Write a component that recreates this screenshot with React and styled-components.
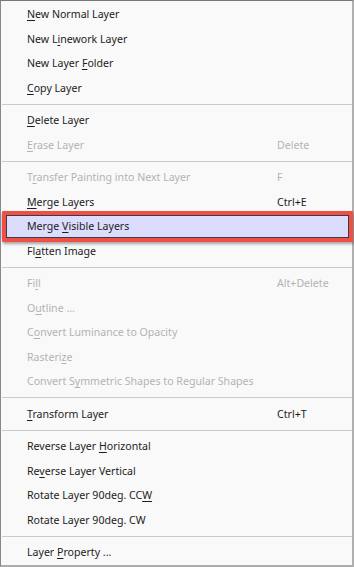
import React from "react";
import styled, { createGlobalStyle } from "styled-components";

const Global = createGlobalStyle`
  html, body { margin: 0; padding: 0; background: #ffffff; }
  body { font-family: "Noto Sans", "DejaVu Sans", sans-serif; }
`;

const Menu = styled.div`
  box-sizing: border-box;
  width: 354px;
  height: 567px;
  background: #f9f9f9;
  border-top: 1px solid #777777;
  border-left: 1px solid #888888;
  border-right: 2px solid #b0b0b0;
  border-bottom: 2px solid #acacac;
  padding-top: 1px;
  display: flex;
  flex-direction: column;
`;

const Item = styled.div`
  position: relative;
  height: 24.5px;
  flex: 0 0 24.5px;
  display: grid;
  grid-template-columns: 1fr 75px;
  align-items: center;
  padding-left: 26px;
  font-size: 10.6px;
  color: ${(p) => (p.$disabled ? "#b3b3b3" : "#1c1c1c")};
  background: ${(p) => (p.$active ? "#dcdcfd" : "transparent")};
  white-space: nowrap;

  ${(p) =>
    p.$active &&
    `
    &::after {
      content: "";
      position: absolute;
      top: -3px;
      bottom: -3px;
      left: 1px;
      right: -1px;
      border: 4px solid #ef4f45;
      border-radius: 1px;
      box-shadow: inset 0 0 0 1px #3a3a48, 1px 2px 3px rgba(0, 0, 0, 0.35);
      pointer-events: none;
    }
  `}
`;

const Label = styled.span``;

const Shortcut = styled.span``;

const Key = styled.span`
  text-decoration: underline;
  text-underline-offset: 2px;
`;

const Separator = styled.div`
  flex: 0 0 8px;
  display: flex;
  align-items: center;
  margin: 0 0 0 1px;

  &::before {
    content: "";
    flex: 1;
    height: 1px;
    background: #cbcbcb;
  }
`;

const groups = [
  [
    { pre: "", k: "N", post: "ew Normal Layer" },
    { pre: "New L", k: "i", post: "nework Layer" },
    { pre: "New Layer ", k: "F", post: "older" },
    { pre: "", k: "C", post: "opy Layer" },
  ],
  [
    { pre: "", k: "D", post: "elete Layer" },
    { pre: "", k: "E", post: "rase Layer", sc: "Delete", dis: true },
  ],
  [
    { pre: "T", k: "r", post: "ansfer Painting into Next Layer", sc: "F", dis: true },
    { pre: "", k: "M", post: "erge Layers", sc: "Ctrl+E" },
    { pre: "Merge ", k: "V", post: "isible Layers", active: true },
    { pre: "Fl", k: "a", post: "tten Image" },
  ],
  [
    { pre: "Fi", k: "l", post: "l", sc: "Alt+Delete", dis: true },
    { pre: "O", k: "u", post: "tline ...", dis: true },
    { pre: "C", k: "o", post: "nvert Luminance to Opacity", dis: true },
    { pre: "Rasteri", k: "z", post: "e", dis: true },
    { pre: "Convert S", k: "y", post: "mmetric Shapes to Regular Shapes", dis: true },
  ],
  [{ pre: "", k: "T", post: "ransform Layer", sc: "Ctrl+T" }],
  [
    { pre: "Reverse Layer ", k: "H", post: "orizontal" },
    { pre: "Re", k: "v", post: "erse Layer Vertical" },
    { pre: "Rotate Layer 90deg. CC", k: "W", post: "" },
    { pre: "Rotate Layer 90deg. CW", k: "", post: "" },
  ],
  [{ pre: "Layer ", k: "P", post: "roperty ..." }],
];

export default function App() {
  return (
    <>
      <Global />
      <Menu>
        {groups.map((g, gi) => (
          <React.Fragment key={gi}>
            {gi > 0 && <Separator />}
            {g.map((it, i) => (
              <Item key={i} $disabled={it.dis} $active={it.active}>
                <Label>
                  {it.pre}
                  {it.k && <Key>{it.k}</Key>}
                  {it.post}
                </Label>
                <Shortcut>{it.sc || ""}</Shortcut>
              </Item>
            ))}
          </React.Fragment>
        ))}
      </Menu>
    </>
  );
}
